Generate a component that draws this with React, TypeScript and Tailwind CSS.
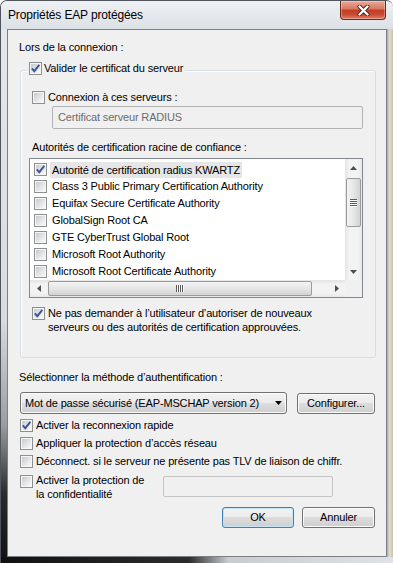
import type { ReactNode } from "react";

function Check({ checked = false }: { checked?: boolean }) {
  return (
    <span className="flex h-[13px] w-[13px] shrink-0 border border-[#8e8f8f] bg-[#f6f6f6] p-[1px]">
      <span className="flex flex-1 items-center justify-center bg-[linear-gradient(135deg,#c6cad0_0%,#e4e5e8_55%,#f9f9f9_100%)]">
        {checked && (
          <svg width="11" height="11" viewBox="0 0 11 11" className="-m-[1px] shrink-0">
            <path
              d="M1.8 5.4 L4.3 8.2 L9.3 1.8"
              fill="none"
              stroke="#3b5597"
              strokeWidth="1.9"
            />
          </svg>
        )}
      </span>
    </span>
  );
}

function Arrow({ dir }: { dir: "up" | "down" | "left" | "right" }) {
  if (dir === "up" || dir === "down") {
    return (
      <svg width="7" height="4" viewBox="0 0 7 4">
        <polygon points={dir === "up" ? "0,4 3.5,0 7,4" : "0,0 3.5,4 7,0"} fill="#4f4f4f" />
      </svg>
    );
  }
  return (
    <svg width="4" height="7" viewBox="0 0 4 7">
      <polygon points={dir === "left" ? "4,0 0,3.5 4,7" : "0,0 4,3.5 0,7"} fill="#4f4f4f" />
    </svg>
  );
}

function Btn({ children, w, focus = false }: { children: ReactNode; w: string; focus?: boolean }) {
  return (
    <div
      className={`flex h-[21px] ${w} items-center justify-center rounded-[3px] border bg-[linear-gradient(to_bottom,#f2f2f2_0%,#ebebeb_50%,#dddddd_50%,#cfcfcf_100%)] ${
        focus
          ? "border-[#3c7fb1] shadow-[inset_0_0_0_1px_#c4e5f6]"
          : "border-[#707070] shadow-[inset_0_0_0_1px_#fbfbfb]"
      }`}
    >
      {children}
    </div>
  );
}

const certs = [
  "Class 3 Public Primary Certification Authority",
  "Equifax Secure Certificate Authority",
  "GlobalSign Root CA",
  "GTE CyberTrust Global Root",
  "Microsoft Root Authority",
  "Microsoft Root Certificate Authority",
];

export default function App() {
  return (
    <div className="flex h-[563px] w-[393px] flex-col overflow-hidden rounded-t-[7px] border-l border-t border-[#50555b] bg-[#dfe3e8] font-['Liberation_Sans',Arial,sans-serif] text-[11px] leading-[15px] tracking-[-0.15px] text-black">
      {/* title bar */}
      <div className="flex h-[28px] shrink-0 items-start justify-between bg-[linear-gradient(to_bottom,#eef1f4,#dce1e6)] pl-[7px] pr-[7px]">
        <span className="mt-[6px] text-[12px] leading-[16px]">Propriétés EAP protégées</span>
        <div className="flex h-[19px] w-[46px] items-center justify-center rounded-b-[4px] border border-t-0 border-[#6b2a21] bg-[linear-gradient(to_bottom,#eba99a_0%,#d97a62_42%,#c23e25_52%,#c94b31_75%,#e27e63_100%)] shadow-[inset_0_0_0_1px_rgba(255,255,255,0.3)]">
          <svg width="13" height="11" viewBox="0 0 13 11">
            <path d="M2.5 1.5 L10.5 9.5 M10.5 1.5 L2.5 9.5" stroke="#4a1d15" strokeWidth="4" strokeLinecap="round" />
            <path d="M2.5 1.5 L10.5 9.5 M10.5 1.5 L2.5 9.5" stroke="#ffffff" strokeWidth="2.4" strokeLinecap="round" />
          </svg>
        </div>
      </div>

      <div className="flex h-[528px] shrink-0">
        <div className="w-[6px] bg-[linear-gradient(to_bottom,#e4e7eb_0%,#d8dce0_55%,#9a9da1_75%,#2a2a2a_88%,#151515_100%)]" />

        {/* client area */}
        <div className="flex w-[380px] flex-col border border-[#7b8087] bg-[#f0f0f0] pl-[11px] pr-[10px]">
          <div className="mt-[10px] h-[15px]">Lors de la connexion :</div>

          <div className="relative ml-[1px] mt-[15px] h-[288px] w-[356px] rounded-[3px] border border-[#d5dfe5] pl-[8px] pt-[19px] shadow-[inset_1px_1px_0_#ffffff]">
            <div className="absolute -top-[10px] left-[6px] flex h-[15px] items-center gap-[2px] bg-[#f0f0f0] px-[2px]">
              <Check checked />
              <span>Valider le certificat du serveur</span>
            </div>

            <div className="ml-[3px] flex h-[15px] items-center gap-[3px]">
              <Check />
              <span>Connexion à ces serveurs :</span>
            </div>
            <div className="ml-[23px] mt-[1px] flex h-[23px] w-[311px] items-center rounded-[2px] border border-[#b3b3b3] pl-[5px] text-[#6d6d6d]">
              Certificat serveur RADIUS
            </div>

            <div className="ml-[3px] mt-[11px] h-[15px]">Autorités de certification racine de confiance :</div>

            <div className="mt-[3px] flex h-[140px] w-[334px] flex-col border border-[#828790] bg-white">
              <div className="flex h-[121px]">
                <div className="flex-1 overflow-hidden whitespace-nowrap pl-[4px] pt-[2px]">
                  <div className="flex h-[17px] items-center">
                    <Check checked />
                    <span className="ml-[3px] bg-[#e6e6e6] px-[2px] leading-[16px]">
                      Autorité de certification radius KWARTZ
                    </span>
                  </div>
                  {certs.map((c) => (
                    <div key={c} className="flex h-[17px] items-center">
                      <Check />
                      <span className="ml-[5px]">{c}</span>
                    </div>
                  ))}
                </div>
                <div className="flex w-[17px] flex-col bg-[linear-gradient(to_right,#e4e4e4,#f3f3f3_25%,#f3f3f3_75%,#e9e9e9)]">
                  <div className="flex h-[17px] items-center justify-center">
                    <Arrow dir="up" />
                  </div>
                  <div className="flex-1">
                    <div className="mx-[1px] mt-[2px] flex h-[49px] items-center justify-center rounded-[2px] border border-[#9b9b9b] bg-[linear-gradient(to_right,#f4f4f4,#e6e6e6_50%,#d3d3d3)]">
                      <svg width="7" height="8" viewBox="0 0 7 8">
                        <path d="M0 0.5h7M0 2.5h7M0 4.5h7M0 6.5h7" stroke="#5a5a5a" />
                        <path d="M0 1.5h7M0 3.5h7M0 5.5h7M0 7.5h7" stroke="#fafafa" />
                      </svg>
                    </div>
                  </div>
                  <div className="flex h-[17px] items-center justify-center">
                    <Arrow dir="down" />
                  </div>
                </div>
              </div>
              <div className="flex h-[17px]">
                <div className="flex flex-1 bg-[linear-gradient(to_bottom,#e4e4e4,#f3f3f3_25%,#f3f3f3_75%,#e9e9e9)]">
                  <div className="flex w-[17px] items-center justify-center">
                    <Arrow dir="left" />
                  </div>
                  <div className="flex flex-1 items-center">
                    <div className="ml-[1px] flex h-[15px] w-[264px] items-center justify-center rounded-[2px] border border-[#9b9b9b] bg-[linear-gradient(to_bottom,#f4f4f4,#e6e6e6_50%,#d3d3d3)]">
                      <svg width="8" height="7" viewBox="0 0 8 7">
                        <path d="M0.5 0v7M2.5 0v7M4.5 0v7M6.5 0v7" stroke="#5a5a5a" />
                        <path d="M1.5 0v7M3.5 0v7M5.5 0v7M7.5 0v7" stroke="#fafafa" />
                      </svg>
                    </div>
                  </div>
                  <div className="flex w-[17px] items-center justify-center">
                    <Arrow dir="right" />
                  </div>
                </div>
                <div className="w-[17px] bg-[#f0f0f0]" />
              </div>
            </div>

            <div className="ml-[3px] mt-[8px] flex gap-[3px] leading-[14px]">
              <span className="mt-[1px]">
                <Check checked />
              </span>
              <span>
                Ne pas demander à l’utilisateur d’autoriser de nouveaux
                <br />
                serveurs ou des autorités de certification approuvées.
              </span>
            </div>
          </div>

          <div className="mt-[12px] h-[15px]">Sélectionner la méthode d’authentification :</div>

          <div className="mt-[7px] flex items-start">
            <div className="ml-[1px] flex h-[22px] w-[267px] items-center justify-between rounded-[3px] border border-[#707070] bg-[linear-gradient(to_bottom,#f2f2f2_0%,#ebebeb_50%,#dddddd_50%,#cfcfcf_100%)] pl-[4px] pr-[4px] shadow-[inset_0_0_0_1px_#fbfbfb]">
              <span>Mot de passe sécurisé (EAP-MSCHAP version 2)</span>
              <svg width="7" height="4" viewBox="0 0 7 4">
                <polygon points="0,0 3.5,4 7,0" fill="#000000" />
              </svg>
            </div>
            <div className="ml-[10px] mt-[1px]">
              <Btn w="w-[78px]">Configurer...</Btn>
            </div>
          </div>

          <div className="ml-[1px] mt-[2px] flex h-[18px] items-center gap-[3px]">
            <Check checked />
            <span>Activer la reconnexion rapide</span>
          </div>
          <div className="ml-[1px] flex h-[18px] items-center gap-[3px]">
            <Check />
            <span>Appliquer la protection d’accès réseau</span>
          </div>
          <div className="ml-[1px] flex h-[18px] items-center gap-[3px]">
            <Check />
            <span>Déconnect. si le serveur ne présente pas TLV de liaison de chiffr.</span>
          </div>
          <div className="ml-[1px] mt-[3px] flex items-start">
            <span className="mt-[2px]">
              <Check />
            </span>
            <span className="ml-[3px] w-[127px] leading-[14px]">
              Activer la protection de
              <br />
              la confidentialité
            </span>
            <div className="mt-[3px] h-[21px] w-[170px] rounded-[2px] border border-[#c4c4c4] bg-[#f0f0f0]" />
          </div>

          <div className="mt-[6px] flex justify-end gap-[8px] pr-[1px]">
            <Btn w="w-[72px]" focus>
              OK
            </Btn>
            <Btn w="w-[73px]">Annuler</Btn>
          </div>
        </div>

        <div className="w-[6px] bg-[linear-gradient(to_right,#a9abad,#e2dfd0_45%,#c9c29f)]" />
      </div>

      <div className="h-[6px] shrink-0 bg-[linear-gradient(to_right,#111111_0%,#2c2c2c_48%,#c8cbd0_58%,#dfe2e6_100%)]" />
    </div>
  );
}
